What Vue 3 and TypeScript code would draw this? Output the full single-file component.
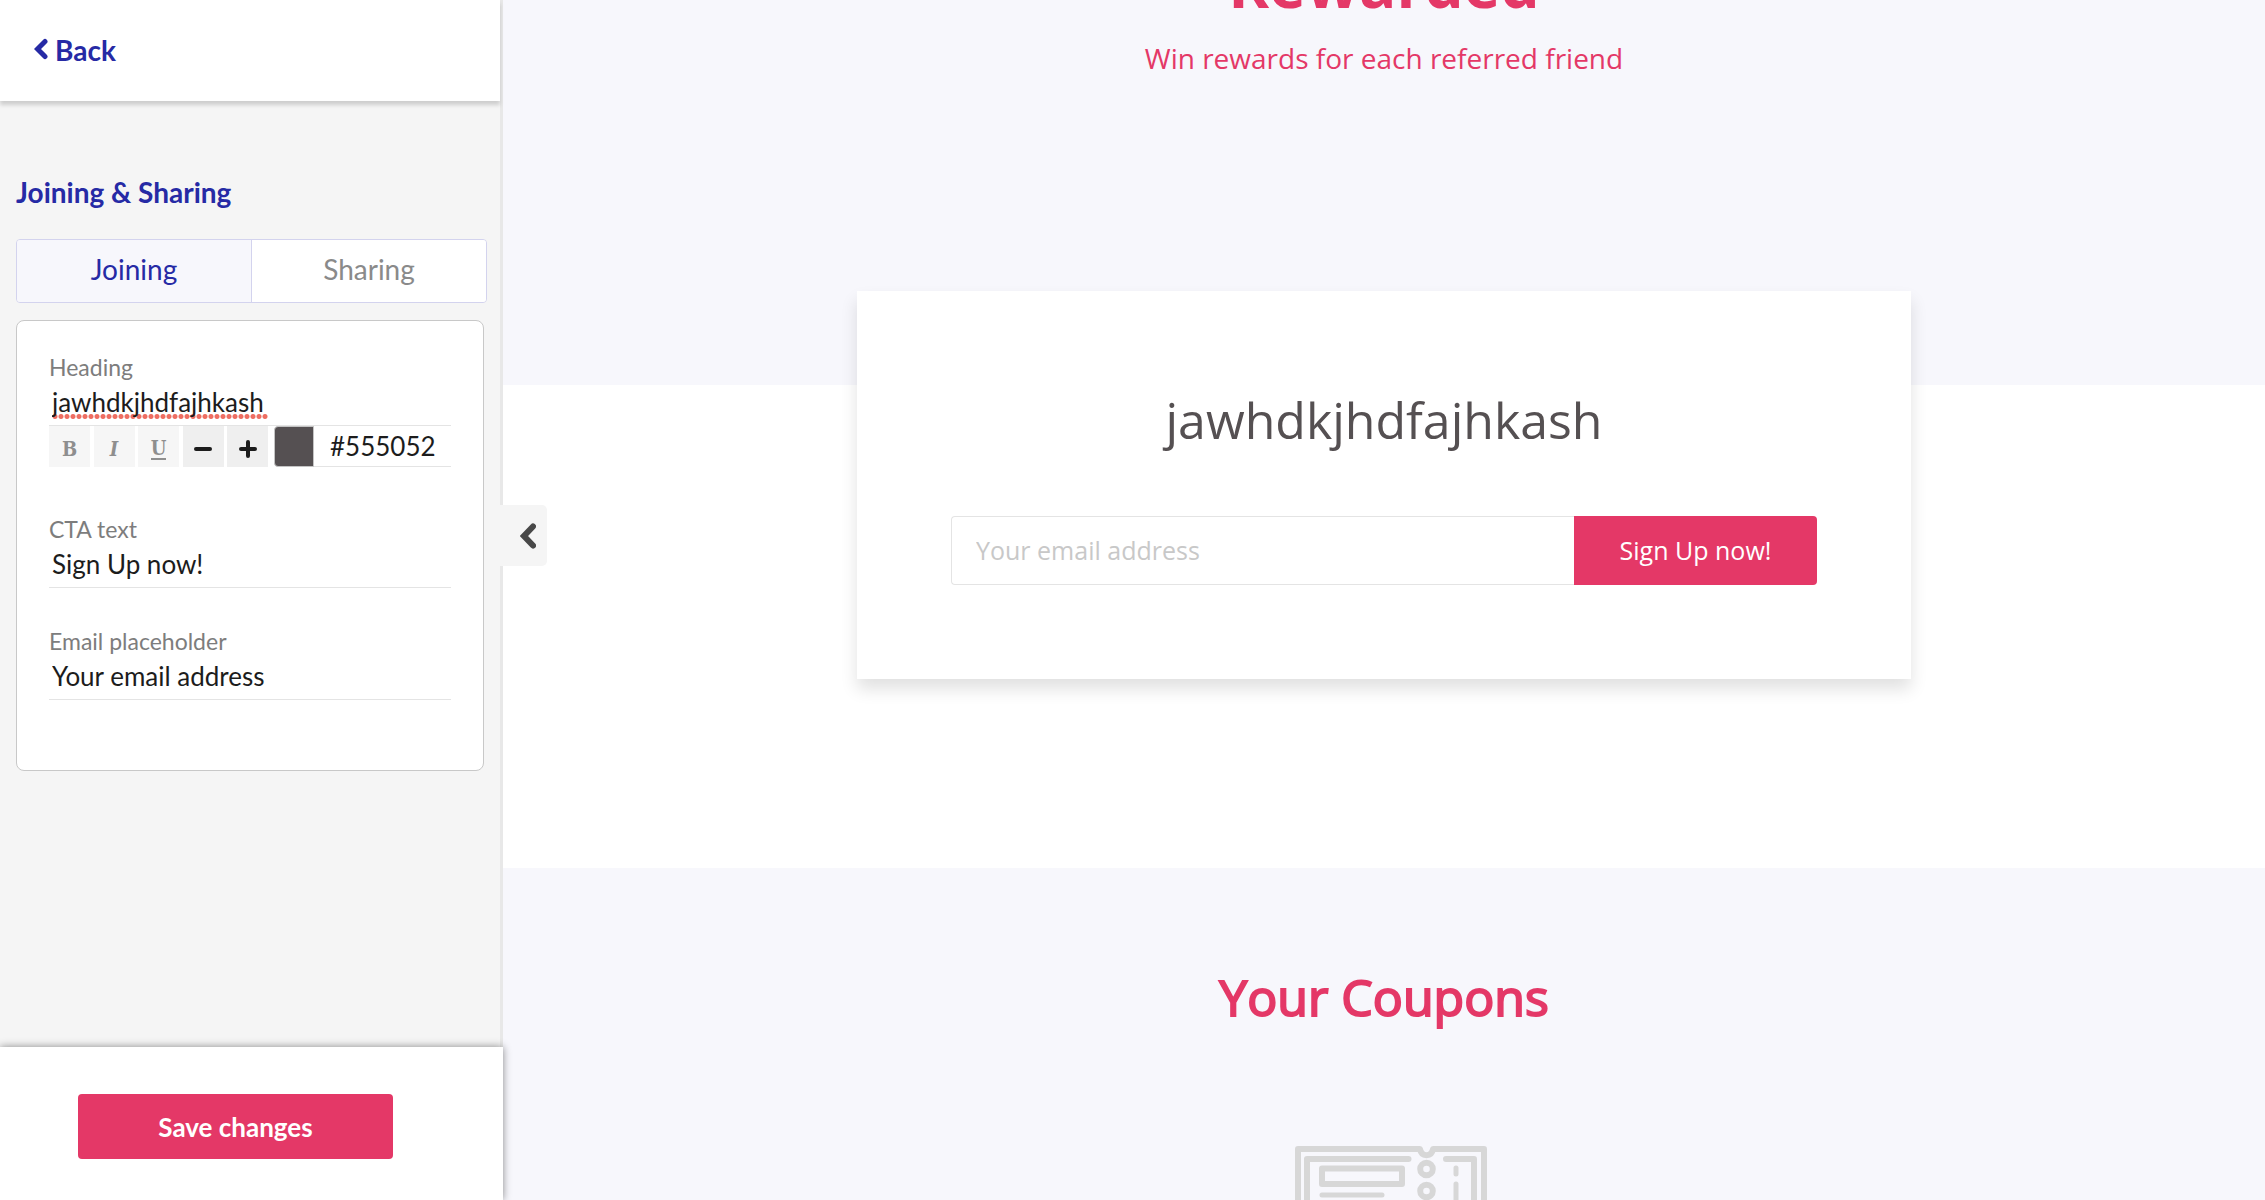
<script setup lang="ts">
import { ref } from 'vue'

const activeTab = ref<'joining' | 'sharing'>('joining')
const heading = ref('jawhdkjhdfajhkash')
const headingColor = ref('#555052')
const ctaText = ref('Sign Up now!')
const emailPlaceholder = ref('Your email address')
const email = ref('')
</script>

<template>
  <div class="editor">
    <aside class="sidebar">
      <header class="topbar">
        <a class="back" href="#">
          <svg class="back-icon" viewBox="0 0 14 22" aria-hidden="true">
            <path d="M11 3.5 3.5 11 11 18.5" />
          </svg>
          Back
        </a>
      </header>

      <div class="settings">
        <h2 class="settings-title">Joining &amp; Sharing</h2>

        <div class="tabs" role="tablist">
          <button
            class="tab"
            :class="{ active: activeTab === 'joining' }"
            type="button"
            role="tab"
            :aria-selected="activeTab === 'joining'"
            @click="activeTab = 'joining'"
          >Joining</button>
          <button
            class="tab"
            :class="{ active: activeTab === 'sharing' }"
            type="button"
            role="tab"
            :aria-selected="activeTab === 'sharing'"
            @click="activeTab = 'sharing'"
          >Sharing</button>
        </div>

        <form class="panel" @submit.prevent>
          <div class="field">
            <label for="heading">Heading</label>
            <div class="spelled">
              <span class="spell-mark" aria-hidden="true"></span>
              <input id="heading" v-model="heading" class="line-input" type="text" spellcheck="false" />
            </div>
            <div class="toolbar">
              <div class="format">
                <button class="tool muted bold" type="button" aria-label="Bold">B</button>
                <button class="tool muted italic" type="button" aria-label="Italic">I</button>
                <button class="tool muted underline" type="button" aria-label="Underline"><span>U</span></button>
                <button class="tool" type="button" aria-label="Decrease size">
                  <svg viewBox="0 0 18 18" aria-hidden="true"><path d="M2 9H16" /></svg>
                </button>
                <button class="tool" type="button" aria-label="Increase size">
                  <svg viewBox="0 0 18 18" aria-hidden="true"><path d="M2 9H16M9 2V16" /></svg>
                </button>
              </div>
              <button class="swatch" type="button" aria-label="Pick colour" :style="{ backgroundColor: headingColor }"></button>
              <input v-model="headingColor" class="hex" type="text" aria-label="Heading colour" spellcheck="false" />
            </div>
          </div>

          <div class="field">
            <label for="cta">CTA text</label>
            <input id="cta" v-model="ctaText" class="line-input" type="text" />
          </div>

          <div class="field">
            <label for="placeholder">Email placeholder</label>
            <input id="placeholder" v-model="emailPlaceholder" class="line-input" type="text" />
          </div>
        </form>
      </div>

      <footer class="actions">
        <button class="save" type="button">Save changes</button>
      </footer>

      <button class="collapse" type="button" aria-label="Collapse sidebar">
        <svg viewBox="0 0 16 26" aria-hidden="true"><path d="M13 3.5 4 13 13 22.5" /></svg>
      </button>
    </aside>

    <main class="preview">
      <section class="hero">
        <h1>Rewarded</h1>
        <p>Win rewards for each referred friend</p>
      </section>

      <section class="join">
        <form class="join-card" @submit.prevent>
          <h2 :style="{ color: headingColor }">{{ heading }}</h2>
          <div class="join-row">
            <input v-model="email" type="email" :placeholder="emailPlaceholder" aria-label="Email" />
            <button type="submit">{{ ctaText }}</button>
          </div>
        </form>
      </section>

      <section class="coupons">
        <h2>Your Coupons</h2>
        <svg class="ticket" viewBox="-14 0 206 110" aria-hidden="true">
          <path d="M3 110V3H125Q126 9 131.500 9.300Q137 9 138 3H189V110" />
          <path d="M12 110V13H113.500M151 13H179V110" />
          <rect x="27" y="22.500" width="80" height="15.500" />
          <path class="thin" d="M27 49H87M161 22V28M161 38V60" />
          <circle cx="131.500" cy="23" r="6.300" />
          <circle cx="131.500" cy="45" r="6.300" />
        </svg>
      </section>
    </main>
  </div>
</template>

<style>
body {
  margin: 0;
  overflow: hidden;
}
</style>

<style scoped>
* {
  box-sizing: border-box;
}

h1,
h2,
p {
  margin: 0;
}

button,
input {
  margin: 0;
  padding: 0;
  border: 0;
  border-radius: 0;
  outline: 0;
  font: inherit;
  background: none;
}

button {
  cursor: pointer;
}

svg {
  fill: none;
  stroke: currentColor;
}

.editor {
  display: flex;
  height: 100vh;
  font-family: Lato, 'Open Sans', sans-serif;
  background: #fff;
}

.sidebar {
  position: relative;
  z-index: 1;
  display: flex;
  flex: none;
  flex-direction: column;
  width: 503px;
  border-right: 3px solid #e8e8e8;
  background: #f5f5f5;
}

.topbar {
  display: flex;
  align-items: center;
  height: 101px;
  padding: 0 34px 2px;
  background: #fff;
  box-shadow: 0 4px 4px rgba(0, 0, 0, 0.16);
}

.back {
  display: flex;
  align-items: center;
  gap: 7px;
  color: #262aa5;
  font-size: 28px;
  font-weight: 700;
  line-height: 36px;
  text-decoration: none;
}

.back-icon {
  width: 14px;
  height: 22px;
  margin-bottom: 2px;
  stroke-width: 5;
  stroke-linecap: round;
}

.settings {
  flex: 1;
  padding: 73px 13px 0 16px;
}

.settings-title {
  color: #262aa5;
  font-size: 28px;
  font-weight: 700;
  line-height: 36px;
}

.tabs {
  display: flex;
  height: 64px;
  margin-top: 29px;
  overflow: hidden;
  border: 1px solid #d3d3ee;
  border-radius: 4px;
}

.tab {
  flex: 1;
  padding-bottom: 4px;
  color: #8a8a8a;
  font-size: 28px;
  line-height: 36px;
  background: #fff;
}

.tab.active {
  color: #262aa5;
  background: #f7f7fc;
}

.tab + .tab {
  border-left: 1px solid #d3d3ee;
}

.panel {
  height: 451px;
  margin: 17px 3px 0 0;
  padding: 31px 32px 0;
  border: 1px solid #c8c8c8;
  border-radius: 8px;
  background: #fff;
}

.field {
  display: flex;
  flex-direction: column;
  margin-bottom: 38px;
}

.field:first-child {
  margin-bottom: 47px;
}

.field label {
  color: #7d7d7d;
  font-size: 23px;
  line-height: 30px;
}

.spelled {
  position: relative;
}

.spell-mark {
  position: absolute;
  bottom: 7px;
  left: 3px;
  width: 216px;
  height: 5px;
  background: radial-gradient(circle, #ee6e62 2px, transparent 3px) 0 0 / 6px 5px repeat-x;
}

.line-input {
  position: relative;
  width: 100%;
  height: 44px;
  padding: 0 3px 4px;
  border-bottom: 1px solid #e4e4e4;
  color: #1c1c1c;
  font-size: 26px;
}

.toolbar {
  display: flex;
  height: 41px;
}

.format {
  display: flex;
  justify-content: space-between;
  width: 219px;
  margin-right: 6px;
}

.tool {
  display: flex;
  align-items: center;
  justify-content: center;
  width: 41px;
  color: #1c1c1c;
  background: #efefef;
}

.tool svg {
  width: 18px;
  height: 18px;
  margin-top: 5px;
  stroke-width: 4;
  stroke-linecap: round;
}

.muted {
  padding-top: 5px;
  color: #8e8e8e;
  font-family: 'DejaVu Serif Condensed', 'DejaVu Serif', serif;
  font-size: 20px;
  font-weight: 700;
  line-height: 24px;
  background: #f6f6f6;
}

.italic {
  font-style: italic;
}

.underline span {
  line-height: 20px;
  border-bottom: 2px solid currentColor;
}

.swatch {
  width: 40px;
  border: 1px solid #c4c4c4;
  border-radius: 4px 0 0 4px;
}

.hex {
  flex: 1;
  min-width: 0;
  padding: 0 0 0 16px;
  border-bottom: 1px solid #e4e4e4;
  color: #1c1c1c;
  font-size: 26px;
}

.actions {
  height: 153px;
  margin-right: -3px;
  padding: 47px 110px 0 78px;
  background: #fff;
  box-shadow: 0 0 8px rgba(0, 0, 0, 0.45);
}

.save {
  width: 100%;
  height: 65px;
  border-radius: 4px;
  color: #fff;
  font-size: 26px;
  font-weight: 700;
  background: #e43867;
}

.collapse {
  position: absolute;
  top: calc(50% - 95px);
  left: 100%;
  display: flex;
  align-items: center;
  justify-content: center;
  width: 47px;
  height: 61px;
  padding-left: 9px;
  border-radius: 0 5px 5px 0;
  color: #484848;
  background: #f5f5f5;
}

.collapse svg {
  width: 16px;
  height: 26px;
  stroke-width: 6;
  stroke-linecap: round;
}

.preview {
  flex: 1;
  min-width: 0;
  overflow: hidden;
  font-family: 'Open Sans', 'Noto Sans', sans-serif;
  text-align: center;
}

.hero {
  display: flow-root;
  height: 385px;
  color: #e43867;
  background: #f7f7fc;
}

.hero h1 {
  margin-top: -56px;
  font-size: 62px;
  font-weight: 700;
  line-height: 80px;
}

.hero p {
  margin-top: 14px;
  font-size: 28px;
  line-height: 40px;
}

.join {
  height: 483px;
  padding: 0 40px;
  background: #fff;
}

.join-card {
  position: relative;
  top: -94px;
  max-width: 1054px;
  height: 388px;
  margin: 0 auto;
  padding: 93px 94px 0;
  background: #fff;
  box-shadow: 0 10px 16px rgba(0, 0, 0, 0.12);
}

.join-card h2 {
  font-size: 50px;
  font-weight: 400;
  line-height: 72px;
}

.join-row {
  display: flex;
  height: 69px;
  margin-top: 60px;
}

.join-row input {
  flex: 1;
  min-width: 0;
  padding: 0 24px 2px;
  border: 1px solid #e4e4e4;
  border-right: 0;
  border-radius: 4px 0 0 4px;
  color: #555052;
  font-size: 25px;
}

.join-row input::placeholder {
  color: #c8c8c8;
  opacity: 1;
}

.join-row button {
  width: 243px;
  padding-bottom: 2px;
  border-radius: 0 4px 4px 0;
  color: #fff;
  font-size: 25px;
  background: #e43867;
}

.coupons {
  height: 600px;
  padding-top: 93px;
  background: #f7f7fc;
}

.coupons h2 {
  color: #e43867;
  font-size: 50px;
  font-weight: 400;
  line-height: 72px;
  -webkit-text-stroke: 2px #e43867;
}

.ticket {
  display: block;
  width: 206px;
  height: 110px;
  margin: 113px auto 0;
  color: #d7d7d7;
  stroke-width: 6;
  stroke-linecap: round;
  stroke-linejoin: round;
}

.ticket .thin {
  stroke-width: 5;
}
</style>
